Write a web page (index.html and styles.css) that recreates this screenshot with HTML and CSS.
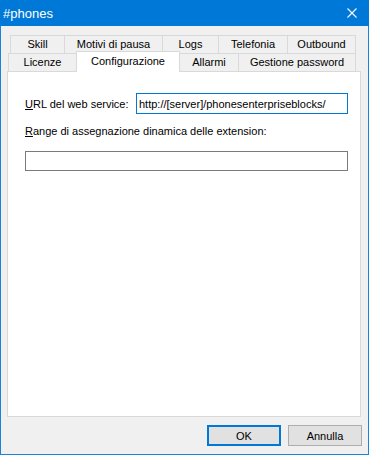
FILE: index.html
```
<!DOCTYPE html>
<html lang="it">
  <head>
    <meta charset="UTF-8" />
    <title>#phones</title>
    <link rel="stylesheet" href="styles.css">
  </head>
  <body>
    <div class="window">
      <div class="titlebar">
        <span class="title">#phones</span>
        <svg class="close" width="10" height="10" viewBox="0 0 10 10">
          <path d="M0.5 0.5 L9.5 9.5 M9.5 0.5 L0.5 9.5" stroke="#ffffff" stroke-width="1.1" fill="none" />
        </svg>
      </div>

      <div class="content">
        <div class="tabs">
          <div class="tab-row back">
            <div class="tab w-skill">Skill</div>
            <div class="tab w-motivi">Motivi di pausa</div>
            <div class="tab w-logs">Logs</div>
            <div class="tab w-telefonia">Telefonia</div>
            <div class="tab w-outbound">Outbound</div>
          </div>
          <div class="tab-row front">
            <div class="tab w-licenze">Licenze</div>
            <div class="tab selected w-config">Configurazione</div>
            <div class="tab w-allarmi">Allarmi</div>
            <div class="tab w-gestione">Gestione password</div>
          </div>
        </div>

        <div class="panel">
          <div class="field-row">
            <label for="url"><u>U</u>RL del web service:</label>
            <input type="text" id="url" class="textbox focused" value="http://[server]/phonesenterpriseblocks/" />
          </div>
          <label class="block-label" for="range"><u>R</u>ange di assegnazione dinamica delle extension:</label>
          <input type="text" id="range" class="textbox wide" value="" />
        </div>

        <div class="footer">
          <button class="button default">OK</button>
          <button class="button">Annulla</button>
        </div>
      </div>
    </div>
  </body>
</html>
```

FILE: styles.css
```
/* finestra di dialogo */
body {
  margin: 0;
  font-family: "Liberation Sans", Arial, sans-serif;
  font-size: 11px;
  color: #000000;
  background-color: #ffffff;
}

.window {
  width: 369px;
  height: 455px;
  box-sizing: border-box;
  border: 1px solid #1883d7;
  border-top: none;
  background-color: #f0f0f0;
  display: flex;
  flex-direction: column;
}

.titlebar {
  height: 26px;
  margin: 0 -1px;
  background-color: #0078d7;
  color: #ffffff;
  display: flex;
  align-items: center;
  justify-content: space-between;
  padding: 0 12px 0 3px;
}

.title {
  font-size: 13px;
}

.close {
  display: block;
}

.content {
  flex: 1;
  display: flex;
  flex-direction: column;
}

/* schede */
.tabs {
  margin-top: 9px;
}

.tab-row {
  display: flex;
}

.tab-row.back {
  padding-left: 9px;
}

.tab-row.front {
  padding-left: 7px;
}

.tab {
  box-sizing: border-box;
  height: 18px;
  line-height: 17px;
  text-align: center;
  border: 1px solid #d9d9d9;
  border-bottom: none;
  background-color: #f0f0f0;
  white-space: nowrap;
}

.tab + .tab {
  margin-left: -1px;
}

.tab-row.back .tab {
  height: 18px;
}

.tab.selected {
  position: relative;
  z-index: 1;
  background-color: #ffffff;
  height: 21px;
  margin-top: -2px;
  margin-bottom: -1px;
  line-height: 18px;
}

.w-skill { width: 55px; }
.w-motivi { width: 99px; }
.w-logs { width: 57px; }
.w-telefonia { width: 70px; }
.w-outbound { width: 69px; }
.w-licenze { width: 69px; }
.w-config { width: 104px; }
.w-allarmi { width: 60px; }
.w-gestione { width: 118px; }

/* pannello */
.panel {
  margin-left: 6px;
  width: 354px;
  height: 346px;
  box-sizing: border-box;
  border: 1px solid #d9d9d9;
  background-color: #ffffff;
  padding: 21px 12px 0 17px;
}

.field-row {
  display: flex;
  align-items: center;
  justify-content: space-between;
}

.textbox {
  box-sizing: border-box;
  height: 21px;
  border: 1px solid #7a7a7a;
  padding: 0 2px;
  font-family: inherit;
  font-size: 11px;
  color: #000000;
  outline: none;
  margin: 0;
}

.field-row .textbox {
  width: 212px;
}

.textbox.focused {
  border-color: #0078d7;
}

.block-label {
  display: block;
  margin-top: 11px;
}

.textbox.wide {
  width: 323px;
  height: 20px;
  margin-top: 14px;
}

/* pulsanti */
.footer {
  display: flex;
  justify-content: flex-end;
  gap: 7px;
  padding: 8px 6px 0 0;
}

.button {
  box-sizing: border-box;
  width: 74px;
  height: 21px;
  border: 1px solid #adadad;
  background-color: #e1e1e1;
  font-family: inherit;
  font-size: 11px;
  color: #000000;
  padding: 0;
}

.button.default {
  border: 2px solid #0078d7;
}
```
